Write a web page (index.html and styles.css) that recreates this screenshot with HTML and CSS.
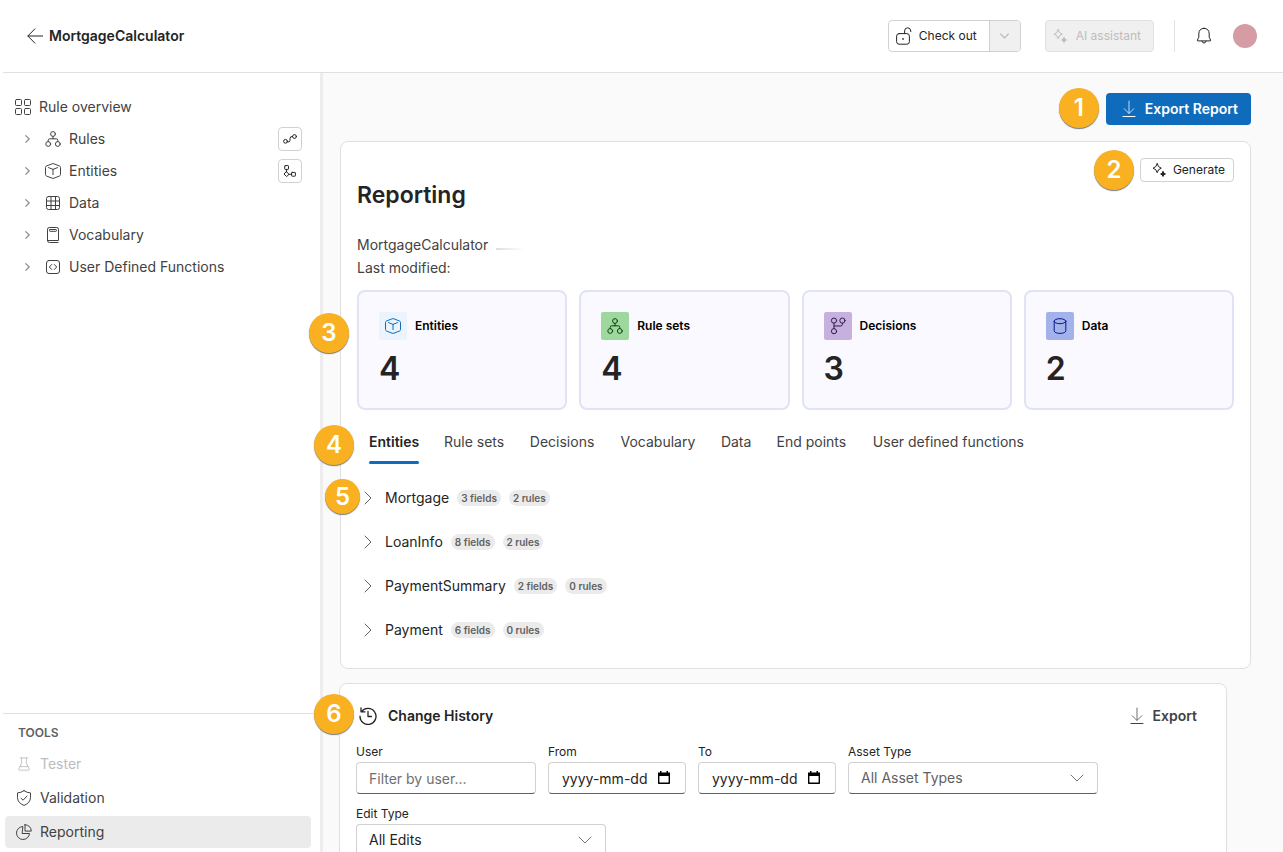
FILE: index.html
```html
<!DOCTYPE html>
<html lang="en">
<head>
<meta charset="utf-8">
<meta name="viewport" content="width=device-width, initial-scale=1">
<title>MortgageCalculator - Reporting</title>
<link rel="stylesheet" href="styles.css">
</head>
<body>
<svg class="sprite" aria-hidden="true">
  <symbol id="i-back" viewBox="0 0 16 16"><path d="M8 .8 .8 8 8 15.2M1 8h15"/></symbol>
  <symbol id="i-grid" viewBox="0 0 16 16"><rect x=".5" y=".5" width="6" height="6" rx="1"/><rect x="9.5" y=".5" width="6" height="6" rx="1"/><rect x=".5" y="9.5" width="6" height="6" rx="1"/><rect x="9.5" y="9.5" width="6" height="6" rx="1"/></symbol>
  <symbol id="i-right" viewBox="0 0 8 14"><path d="m1 1 6 6-6 6"/></symbol>
  <symbol id="i-down" viewBox="0 0 14 8"><path d="m1 1 6 6 6-6"/></symbol>
  <symbol id="i-tree" viewBox="0 0 16 16"><circle cx="8" cy="3" r="2.4"/><circle cx="3.2" cy="13" r="2.4"/><circle cx="12.8" cy="13" r="2.4"/><path d="M8 5.4v2.4M3.2 10.600V9.300q0-1.500 1.500-1.500h6.600q1.500 0 1.500 1.500v1.300"/></symbol>
  <symbol id="i-cube" viewBox="0 0 16 16"><path d="M7.100.8q.9-.4 1.800 0l5.600 2.200q1 .4 1 1.400v7.200q0 1-1 1.400l-5.600 2.200q-.9.400-1.800 0L1.500 13q-1-.4-1-1.400V4.400q0-1 1-1.400zM3.500 4.600 8 6.400l4.500-1.800M8 6.400v5.200"/></symbol>
  <symbol id="i-table" viewBox="0 0 14 14"><rect x=".5" y=".5" width="13" height="13" rx="2"/><path d="M5 .5v13M9.500.5v13M.5 5h13M.5 9.500h13"/></symbol>
  <symbol id="i-book" viewBox="0 0 12 16"><path d="M.5 13.500V2.300Q.5.5 2.300.5h7.400q1.800 0 1.800 1.800v11.200H.5q0 2 2 2h8.500"/><rect x="2.500" y="2.500" width="7" height="1.800" rx=".6"/></symbol>
  <symbol id="i-code" viewBox="0 0 14 14"><rect x=".5" y=".5" width="13" height="13" rx="2.500"/><path d="M5.700 4.500 3.300 7l2.400 2.500M8.300 4.500 10.700 7 8.300 9.500"/></symbol>
  <symbol id="i-flow" viewBox="0 0 14 12"><circle cx="2.500" cy="8.300" r="1.900"/><circle cx="11.500" cy="3.500" r="1.900"/><path d="M4.400 8.900q2.600.6 2.600-1.500V5.400q0-2.200 2.500-2"/></symbol>
  <symbol id="i-schema" viewBox="0 0 12 12"><rect x=".7" y=".6" width="3.800" height="3.800" rx=".6"/><rect x="7.600" y="7.400" width="3.800" height="3.800" rx=".6"/><path d="M2.600 4.400v2.500M2.600 6.900 5 9.300l-2.400 2.300L.3 9.300zM5 9.300h2.600"/></symbol>
  <symbol id="i-lock" viewBox="0 0 16 18"><rect x=".6" y="6.600" width="12.800" height="10.600" rx="2.500"/><path d="M8.600 6.400V4q0-3.200 3-3.200T14.800 4v.6"/><circle class="dot" cx="7" cy="11.900" r=".9"/></symbol>
  <symbol id="i-spark" viewBox="0 0 16 16"><path d="M6.200 1.700Q6.800 5.400 10.300 6.200 6.800 7 6.200 10.700 5.500 7 2 6.200 5.500 5.400 6.200 1.700zM12 9.600q.4 2 2.500 2.400-2.100.4-2.500 2.500-.4-2.100-2.400-2.500 2-.4 2.400-2.400z"/><circle class="dot" cx="12" cy="12" r="1.200"/></symbol>
  <symbol id="i-bell" viewBox="0 0 16 18"><path d="M8 1.300q5.200.2 5.200 5.600v3.400l1.400 2.700q.3.900-.6.900H2q-.9 0-.6-.9l1.400-2.700V6.900Q2.800 1.500 8 1.300zM6 14.300q.3 1.700 2 1.700t2-1.700"/></symbol>
  <symbol id="i-save" viewBox="0 0 14 18"><path class="thin" d="M7 1v12M2.200 8.700 7 13.500l4.800-4.800"/><path d="M1 16.500h12"/></symbol>
  <symbol id="i-branch" viewBox="0 0 16 18"><circle cx="4" cy="3.600" r="2.600"/><circle cx="12.400" cy="3.600" r="2.600"/><circle cx="4" cy="14.200" r="2.600"/><path d="M4 6.200v5.400M12.400 6.200v1q0 1.800-1.800 1.800H4"/></symbol>
  <symbol id="i-db" viewBox="0 0 14 16"><ellipse cx="7" cy="3.200" rx="5.800" ry="2.500"/><path d="M1.200 3.200v9.600q.4 2.500 5.800 2.600 5.400-.1 5.800-2.600V3.200"/></symbol>
  <symbol id="i-flask" viewBox="0 0 14 16"><path d="M2.500 1h9M4.300 1v6L1 13.800q-.4 1.200.8 1.200h10.400q1.200 0 .8-1.200L9.700 7V1M2.400 11h9.200"/></symbol>
  <symbol id="i-shield" viewBox="0 0 16 16"><path d="M8 .7q3 2.100 6.500 2.200v4.800Q14.300 13 8 15.400 1.700 13 1.500 7.700V2.900Q5 2.800 8 .7zM5 8.200l2.100 2L11 6"/></symbol>
  <symbol id="i-pie" viewBox="0 0 16 16"><path d="M6.500 2.500a6.500 6.500 0 1 0 7 7h-7zM9 .7v6.400h6.300Q15 1.300 9 .7z"/></symbol>
  <symbol id="i-history" viewBox="0 0 18 18"><path d="M2.600 4.600A8 8 0 1 1 1 9.200M2 .8v4h4M9 4.500v5h3.500"/></symbol>
  <symbol id="i-calendar" viewBox="0 0 12 13"><path class="dot" d="M0 1.500h2V0h1.500v1.500h5V0H10v1.500h2V5H0z"/><path d="M.7 4v8.300h10.600V4"/></symbol>
</svg>

<div class="app">
  <header class="topbar">
    <a class="back" href="#"><svg class="ic ic-16"><use href="#i-back"/></svg>MortgageCalculator</a>
    <div class="split">
      <button class="split-main"><svg class="ic ic-lock"><use href="#i-lock"/></svg>Check out</button>
      <button class="split-more" disabled aria-label="More check out options"><svg class="ic ic-down-sm"><use href="#i-down"/></svg></button>
    </div>
    <button class="assistant" disabled><svg class="ic ic-16"><use href="#i-spark"/></svg>AI assistant</button>
    <div class="account">
      <button class="bell" aria-label="Notifications"><svg class="ic ic-bell"><use href="#i-bell"/></svg></button>
      <button class="avatar" aria-label="Account"></button>
    </div>
  </header>

  <div class="body">
    <aside class="sidebar">
      <nav class="nav">
        <a class="nav-root" href="#"><svg class="ic ic-16"><use href="#i-grid"/></svg>Rule overview</a>
        <div class="nav-row"><a class="nav-item" href="#"><svg class="ic ic-caret"><use href="#i-right"/></svg><svg class="ic ic-16"><use href="#i-tree"/></svg>Rules</a><button class="mini" aria-label="Rules flow"><svg class="ic ic-14"><use href="#i-flow"/></svg></button></div>
        <div class="nav-row"><a class="nav-item" href="#"><svg class="ic ic-caret"><use href="#i-right"/></svg><svg class="ic ic-16"><use href="#i-cube"/></svg>Entities</a><button class="mini" aria-label="Entity schema"><svg class="ic ic-12"><use href="#i-schema"/></svg></button></div>
        <div class="nav-row"><a class="nav-item" href="#"><svg class="ic ic-caret"><use href="#i-right"/></svg><svg class="ic ic-inset"><use href="#i-table"/></svg>Data</a></div>
        <div class="nav-row"><a class="nav-item" href="#"><svg class="ic ic-caret"><use href="#i-right"/></svg><svg class="ic ic-16"><use href="#i-book"/></svg>Vocabulary</a></div>
        <div class="nav-row"><a class="nav-item" href="#"><svg class="ic ic-caret"><use href="#i-right"/></svg><svg class="ic ic-inset"><use href="#i-code"/></svg>User Defined Functions</a></div>
      </nav>
      <div class="tools">
        <h2 class="tools-title">TOOLS</h2>
        <a class="tool is-disabled" aria-disabled="true"><svg class="ic ic-inset"><use href="#i-flask"/></svg>Tester</a>
        <a class="tool" href="#"><svg class="ic ic-16"><use href="#i-shield"/></svg>Validation</a>
        <a class="tool is-active" href="#" aria-current="page"><svg class="ic ic-16"><use href="#i-pie"/></svg>Reporting</a>
      </div>
    </aside>

    <main class="main">
      <div class="actions">
        <div class="anchor">
          <span class="callout callout-1">1</span>
          <button class="primary"><svg class="ic ic-save"><use href="#i-save"/></svg>Export Report</button>
        </div>
      </div>

      <section class="card report">
        <div class="generate-row">
          <div class="anchor">
            <span class="callout callout-2">2</span>
            <button class="generate"><svg class="ic ic-16"><use href="#i-spark"/></svg>Generate</button>
          </div>
        </div>
        <h1 class="title">Reporting</h1>
        <p class="meta">MortgageCalculator<span class="smudge"></span></p>
        <p class="meta">Last modified:</p>

        <div class="stats anchor">
          <span class="callout callout-3">3</span>
          <div class="stat"><div class="stat-head"><span class="tile tile-blue"><svg class="ic ic-16"><use href="#i-cube"/></svg></span>Entities</div><div class="stat-value">4</div></div>
          <div class="stat"><div class="stat-head"><span class="tile tile-green"><svg class="ic ic-16"><use href="#i-tree"/></svg></span>Rule sets</div><div class="stat-value">4</div></div>
          <div class="stat"><div class="stat-head"><span class="tile tile-purple"><svg class="ic ic-18"><use href="#i-branch"/></svg></span>Decisions</div><div class="stat-value">3</div></div>
          <div class="stat"><div class="stat-head"><span class="tile tile-indigo"><svg class="ic ic-16"><use href="#i-db"/></svg></span>Data</div><div class="stat-value">2</div></div>
        </div>

        <div class="anchor">
          <span class="callout callout-4">4</span>
          <div class="tabs" role="tablist">
            <button class="tab is-selected" role="tab" aria-selected="true" data-label="Entities">Entities</button>
            <button class="tab" role="tab" data-label="Rule sets">Rule sets</button>
            <button class="tab" role="tab" data-label="Decisions">Decisions</button>
            <button class="tab" role="tab" data-label="Vocabulary">Vocabulary</button>
            <button class="tab" role="tab" data-label="Data">Data</button>
            <button class="tab" role="tab" data-label="End points">End points</button>
            <button class="tab" role="tab" data-label="User defined functions">User defined functions</button>
          </div>
        </div>

        <div class="rows anchor">
          <span class="callout callout-5">5</span>
          <button class="row"><svg class="ic ic-right"><use href="#i-right"/></svg><span class="row-name">Mortgage</span><span class="badge">3 fields</span><span class="badge">2 rules</span></button>
          <button class="row"><svg class="ic ic-right"><use href="#i-right"/></svg><span class="row-name">LoanInfo</span><span class="badge">8 fields</span><span class="badge">2 rules</span></button>
          <button class="row"><svg class="ic ic-right"><use href="#i-right"/></svg><span class="row-name">PaymentSummary</span><span class="badge">2 fields</span><span class="badge">0 rules</span></button>
          <button class="row"><svg class="ic ic-right"><use href="#i-right"/></svg><span class="row-name">Payment</span><span class="badge">6 fields</span><span class="badge">0 rules</span></button>
        </div>
      </section>

      <section class="card history">
        <div class="history-head anchor">
          <span class="callout callout-6">6</span>
          <svg class="ic ic-18 ic-history"><use href="#i-history"/></svg>
          <h2 class="history-title">Change History</h2>
          <button class="export"><svg class="ic ic-save"><use href="#i-save"/></svg>Export</button>
        </div>
        <form class="filters">
          <div class="field field-user"><label for="user">User</label><input class="control" id="user" type="text" placeholder="Filter by user..."></div>
          <div class="field field-date"><label for="from">From</label><div class="picker"><input class="control control-date" id="from" type="text" placeholder="yyyy-mm-dd"><svg class="ic ic-calendar"><use href="#i-calendar"/></svg></div></div>
          <div class="field field-date"><label for="to">To</label><div class="picker"><input class="control control-date" id="to" type="text" placeholder="yyyy-mm-dd"><svg class="ic ic-calendar"><use href="#i-calendar"/></svg></div></div>
          <div class="field field-select"><label for="asset">Asset Type</label><div class="picker"><select class="control is-muted" id="asset"><option>All Asset Types</option></select><svg class="ic ic-down"><use href="#i-down"/></svg></div></div>
          <div class="field field-select"><label for="edit">Edit Type</label><div class="picker"><select class="control" id="edit"><option>All Edits</option></select><svg class="ic ic-down"><use href="#i-down"/></svg></div></div>
        </form>
      </section>
    </main>
  </div>
</div>
</body>
</html>
```
FILE: styles.css
```css
* { box-sizing: border-box; }
html { scrollbar-width: none; }
body { margin: 0; background: #fff; color: #242424; font: 14px/20px Inter, "Liberation Sans", sans-serif; }
h1, h2, p { margin: 0; }
a { color: inherit; text-decoration: none; }
button { padding: 0; border: 0; background: none; color: inherit; font: inherit; }
.sprite { position: absolute; width: 0; height: 0; }

.ic { flex: none; display: block; fill: none; stroke: currentColor; stroke-width: 1; stroke-linecap: round; stroke-linejoin: round; }
.dot { fill: currentColor; stroke: none; }
.thin { stroke-opacity: .75; }
.ic-12 { width: 12px; height: 12px; }
.ic-14 { width: 14px; height: 14px; }
.ic-16 { width: 16px; height: 16px; }
.ic-18 { width: 18px; height: 18px; }
.ic-inset { width: 16px; height: 14px; }
.ic-lock { width: 16px; height: 18px; }
.ic-bell { width: 16px; height: 18px; }
.ic-save { width: 14px; height: 18px; }
.ic-caret { width: 5px; height: 8px; color: #8a8a8a; stroke-width: 2; }
.ic-right { width: 8px; height: 14px; color: #616161; }
.ic-down { width: 14px; height: 8px; color: #757575; }
.ic-down-sm { width: 9px; height: 6px; stroke-width: 2; }
.ic-history { stroke-width: 1.3; }

.app { display: flex; flex-direction: column; min-height: 100vh; padding-left: 3px; }

.topbar { position: sticky; top: 0; z-index: 2; display: flex; flex: none; align-items: center; height: 73px; padding: 0 26px 0 24px; border-bottom: 1px solid #e0e0e0; background: #fff; }
.back { display: flex; align-items: center; gap: 6px; margin-right: auto; font-weight: 600; }
.split { display: flex; height: 32px; margin-right: 24px; border: 1px solid #d1d1d1; border-radius: 4px; overflow: hidden; font-size: 12px; }
.split-main { display: flex; align-items: center; gap: 7px; padding: 0 12px 0 7px; }
.split-more { display: grid; place-items: center; width: 31px; border-left: 1px solid #d1d1d1; background: #f0f0f0; color: #bdbdbd; }
.assistant { display: flex; align-items: center; gap: 8px; height: 32px; padding: 0 12px 0 6px; border: 1px solid #e0e0e0; border-radius: 4px; background: #f0f0f0; color: #bdbdbd; font-size: 12px; }
.account { display: flex; align-items: center; gap: 21px; height: 32px; margin-left: 20px; padding-left: 21px; border-left: 1px solid #e0e0e0; }
.avatar { width: 24px; height: 24px; border-radius: 50%; background: #d69ca5; }

.body { display: flex; flex: 1; align-items: flex-start; }
.sidebar { position: sticky; top: 73px; display: flex; flex: 0 0 320px; flex-direction: column; height: calc(100vh - 73px); border-right: 3px solid #ededed; color: #424242; }
.nav { flex: 1; padding: 18px 18px 0 12px; }
.nav-root, .nav-item { display: flex; align-items: center; gap: 8px; height: 32px; }
.nav-row { display: flex; align-items: center; justify-content: space-between; }
.nav-item { gap: 8px; padding-left: 10px; }
.nav-item .ic-caret { margin-right: 7px; }
.mini { display: grid; place-items: center; width: 24px; height: 24px; border: 1px solid #d1d1d1; border-radius: 4px; color: #242424; }
.tools { display: flex; flex-direction: column; gap: 2px; padding: 9px 9px 4px 2px; border-top: 1px solid #e0e0e0; }
.tools-title { margin-bottom: 3px; padding-left: 13px; color: #616161; font-size: 12px; line-height: 20px; font-weight: 600; }
.tool { display: flex; align-items: center; gap: 8px; height: 32px; padding-left: 11px; border-radius: 4px; }
.is-disabled { color: #bdbdbd; }
.is-active { background: #ebebeb; }

.main { flex: 1; align-self: stretch; min-width: 0; padding: 20px 32px 24px 17px; background: #fafafa; }
.anchor { position: relative; }
.actions { display: flex; justify-content: flex-end; margin-bottom: 16px; }
.primary { display: flex; align-items: center; gap: 9px; height: 32px; padding: 0 13px 0 16px; border-radius: 4px; background: #0f6cbd; color: #fff; font-weight: 600; }
.card { padding: 16px; border: 1px solid #e0e0e0; border-radius: 8px; background: #fff; }
.report { margin-bottom: 14px; }
.generate-row { display: flex; justify-content: flex-end; }
.generate { display: flex; align-items: center; gap: 6px; height: 24px; padding: 0 8px 0 10px; border: 1px solid #d1d1d1; border-radius: 4px; font-size: 12px; }
.title { margin: -3px 0 22px; font-size: 23px; line-height: 32px; font-weight: 600; }
.meta { color: #424242; line-height: 23px; }
.smudge { display: inline-block; width: 28px; height: 2px; margin-left: 8px; background: linear-gradient(90deg, #ddd, #fff); }
.stats { display: grid; grid-template-columns: repeat(4, 1fr); gap: 12px; margin: 11px 0 10px; }
.stat { height: 120px; padding: 20px; border: 2px solid #e0e3f3; border-radius: 8px; background: #faf9ff; }
.stat-head { display: flex; align-items: center; gap: 8px; color: #000; font-size: 12px; font-weight: 600; }
.stat-value { margin-top: 8px; font-size: 32px; line-height: 42px; font-weight: 600; }
.tile { display: grid; place-items: center; width: 28px; height: 28px; border-radius: 2px; }
.tile-blue { background: #ebf3fc; color: #0f6cbd; }
.tile-green { background: #9fd89f; color: #094509; }
.tile-purple { background: #c6b1de; color: #341a51; }
.tile-indigo { background: #a4b2eb; color: #001a8a; }

.tabs { display: flex; }
.tab { position: relative; height: 44px; padding: 0 12px; color: #424242; }
.tab::before { content: attr(data-label); display: block; height: 0; overflow: hidden; visibility: hidden; font-weight: 600; }
.tab.is-selected { color: #242424; font-weight: 600; }
.is-selected::after { content: ""; position: absolute; right: 12px; bottom: 0; left: 12px; height: 3px; border-radius: 2px; background: #0f6cbd; }
.rows { display: flex; flex-direction: column; margin-top: 12px; }
.row { display: flex; align-items: center; gap: 8px; height: 44px; padding-left: 7px; }
.row-name { margin-left: 5px; }
.badge { height: 16px; padding: 0 4px; border-radius: 8px; background: #ebebeb; color: #616161; font-size: 10px; line-height: 16px; font-weight: 600; }

.history { margin: 0 24px 0 -1px; }
.history-head { display: flex; align-items: center; gap: 11px; height: 32px; margin-bottom: 12px; padding: 0 13px 0 3px; }
.history-title { margin-right: auto; font-size: 14px; line-height: 20px; font-weight: 600; }
.export { display: flex; align-items: center; gap: 9px; color: #424242; font-weight: 600; }
.filters { display: flex; flex-wrap: wrap; gap: 12px; }
.field { display: flex; flex-direction: column; gap: 2px; }
.field label { font-size: 12px; line-height: 16px; }
.field-user { width: 180px; }
.field-date { width: 138px; }
.field-select { width: 250px; }
.control { appearance: none; width: 100%; height: 32px; padding: 0 12px; border: 1px solid #d1d1d1; border-bottom-color: #616161; border-radius: 4px; background: #fff; color: #242424; font: inherit; }
.control::placeholder { color: #707070; opacity: 1; }
.control-date { padding-left: 13px; }
.control-date::placeholder { color: #242424; }
.control.is-muted { color: #616161; }
.picker { position: relative; }
.picker .ic { position: absolute; top: 12px; right: 14px; pointer-events: none; }
.picker .ic-calendar { top: 9px; right: 16px; width: 12px; height: 13px; color: #000; stroke-width: 1.4; stroke-linecap: butt; }

.callout { position: absolute; z-index: 1; display: grid; place-items: center; width: 40px; height: 40px; border-radius: 50%; background: #f9b122; box-shadow: 0 1px 1px #777; color: #fff; font-size: 24px; font-weight: 600; }
.callout-1 { top: -5px; right: calc(100% + 7px); }
.callout-2 { top: -8px; right: calc(100% + 6px); }
.callout-3 { top: 23px; left: -48px; }
.callout-4 { top: 5px; left: -43px; }
.callout-5 { top: 3px; left: -32px; width: 35px; height: 35px; }
.callout-6 { top: -6px; left: -42px; }
```
